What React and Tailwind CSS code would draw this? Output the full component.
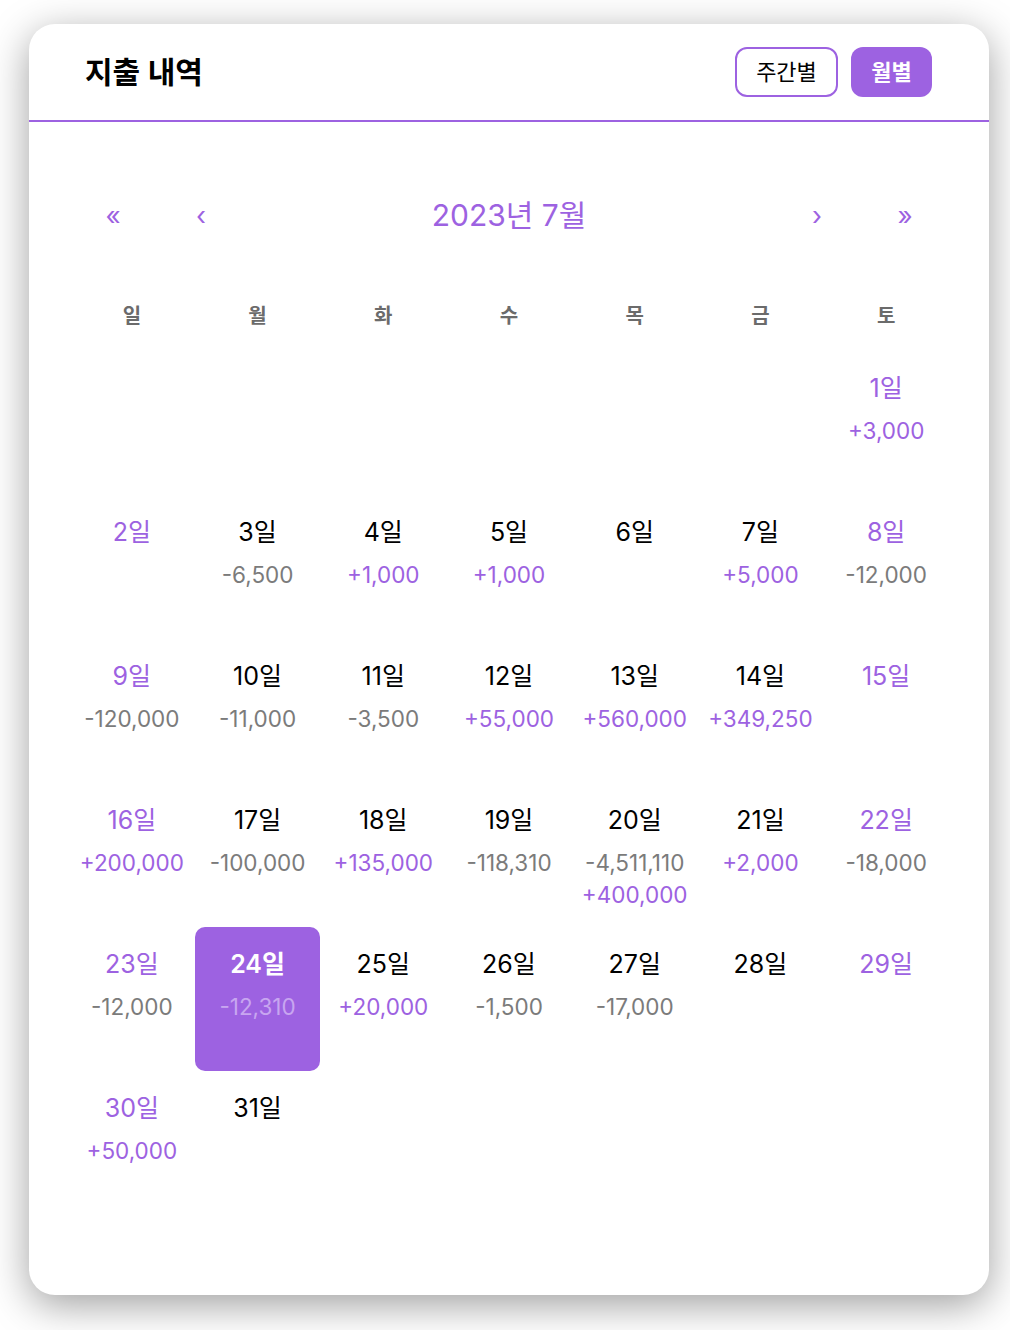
import React from "react";

const days = {
  1: ["+3,000"],
  3: ["-6,500"],
  4: ["+1,000"],
  5: ["+1,000"],
  7: ["+5,000"],
  8: ["-12,000"],
  9: ["-120,000"],
  10: ["-11,000"],
  11: ["-3,500"],
  12: ["+55,000"],
  13: ["+560,000"],
  14: ["+349,250"],
  16: ["+200,000"],
  17: ["-100,000"],
  18: ["+135,000"],
  19: ["-118,310"],
  20: ["-4,511,110", "+400,000"],
  21: ["+2,000"],
  22: ["-18,000"],
  23: ["-12,000"],
  24: ["-12,310"],
  25: ["+20,000"],
  26: ["-1,500"],
  27: ["-17,000"],
  30: ["+50,000"],
};

const weekdays = ["일", "월", "화", "수", "목", "금", "토"];

function Cell({ day, col }) {
  if (!day) return <div className="h-[144px]" />;
  const selected = day === 24;
  const weekend = col === 0 || col === 6;
  const amounts = days[day] || [];
  return (
    <div
      className={
        "h-[144px] flex flex-col items-center pt-[21px] rounded-[10px] " +
        (selected ? "bg-[#9d62e1]" : "")
      }
    >
      <div
        className={
          "text-[25px] leading-[32px] " +
          (selected
            ? "text-white font-semibold"
            : weekend
            ? "text-[#9d62e1]"
            : "text-black")
        }
      >
        {day}일
      </div>
      <div className="mt-[11px] flex flex-col items-center">
        {amounts.map((a, i) => (
          <div
            key={i}
            className={
              "text-[22.5px] leading-[32px] whitespace-nowrap " +
              (selected
                ? "text-[#c8a6f0]"
                : a.startsWith("+")
                ? "text-[#9d62e1]"
                : "text-[#7b7b7b]")
            }
          >
            {a}
          </div>
        ))}
      </div>
    </div>
  );
}

export default function App() {
  const cells = [];
  for (let i = 0; i < 6; i++) cells.push(null);
  for (let d = 1; d <= 31; d++) cells.push(d);
  while (cells.length < 42) cells.push(null);

  return (
    <div
      className="min-h-[1330px] bg-white pt-[24px] px-[29px]"
      style={{ fontFamily: "Inter, 'Noto Sans CJK KR', sans-serif" }}
    >
      <div className="w-[960px] h-[1271px] bg-white rounded-[26px] shadow-[0_10px_40px_rgba(0,0,0,0.38)] overflow-hidden">
        <div className="h-[98px] border-b-2 border-[#9d62e1] flex items-center justify-between pl-[56px] pr-[57px]">
          <div className="text-[30px] font-semibold text-black">
            지출 내역
          </div>
          <div className="flex items-center gap-[13px]">
            <button className="w-[103px] h-[50px] border-2 border-[#9d62e1] rounded-[12px] text-[22px] text-black bg-white">
              주간별
            </button>
            <button className="w-[81px] h-[50px] rounded-[12px] text-[22px] font-semibold text-white bg-[#9d62e1]">
              월별
            </button>
          </div>
        </div>
        <div className="px-[40px] pt-[63px]">
          <div className="h-[60px] flex items-center text-[#9d62e1]">
            <div className="w-[88px] text-center text-[26px]">«</div>
            <div className="w-[88px] text-center text-[26px]">‹</div>
            <div className="flex-1 text-center text-[30px]">2023년 7월</div>
            <div className="w-[88px] text-center text-[26px]">›</div>
            <div className="w-[88px] text-center text-[26px]">»</div>
          </div>
          <div className="mt-[36px] h-[70px] grid grid-cols-7 items-center">
            {weekdays.map((w) => (
              <div
                key={w}
                className="text-center text-[20px] font-bold text-[#6b6b6b]"
              >
                {w}
              </div>
            ))}
          </div>
          <div className="grid grid-cols-7">
            {cells.map((d, i) => (
              <Cell key={i} day={d} col={i % 7} />
            ))}
          </div>
        </div>
      </div>
    </div>
  );
}
